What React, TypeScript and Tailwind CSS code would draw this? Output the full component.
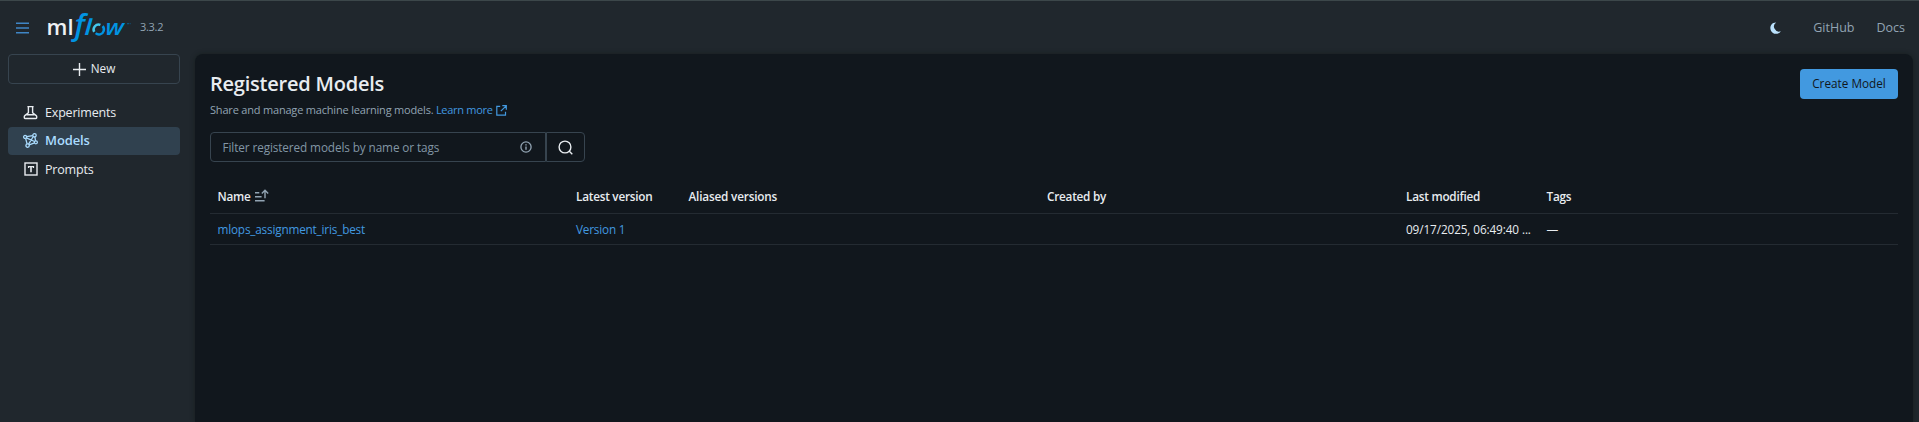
import type { ReactNode } from 'react';

function Logo() {
  return (
    <svg width="86" height="34" viewBox="0 0 86 34" className="block shrink-0 overflow-visible" fontFamily="'Open Sans', sans-serif">
      <text x="-0.5" y="25.2" fontSize="22" fontWeight="600" fill="#eef1f4" textLength="27" lengthAdjust="spacingAndGlyphs">ml</text>
      <g fill="#0194e2" fontStyle="italic" fontWeight="600">
        <text fontSize="29.5" transform="translate(27.6 25.2) scale(1.02 1)">f</text>
        <text fontSize="22" fontWeight="700" transform="translate(37.6 25.2) skewX(-4)">l</text>
        <text fontSize="22" transform="translate(57.9 25.2) scale(1.1 1) skewX(-4)">w</text>
      </g>
      <g fill="none" strokeWidth="2.5">
        <path d="M55.6 16.2a5 5 0 0 1-2.5 8.2a5 5 0 0 1-4.4-1.2" stroke="#0194e2" />
        <path d="M47.2 21.9a5 5 0 0 1 6.2-7" stroke="#43c9ed" />
      </g>
      <path d="M80 13.7h2.2M82.8 13.7h.8" stroke="#0b5f8f" strokeWidth="1" />
    </svg>
  );
}

function MenuIcon() {
  return (
    <svg width="13" height="12" viewBox="0 0 13 12" fill="none" stroke="#3f86c6" strokeWidth="1.6">
      <path d="M0 1.3h13M0 6h13M0 10.7h13" />
    </svg>
  );
}

function BeakerIcon() {
  return (
    <svg width="15" height="15" viewBox="0 0 15 15" fill="none" stroke="currentColor" strokeWidth="1.4" strokeLinejoin="round">
      <path d="M4.4 1.6h6.2M5.4 1.6v6.2L1.8 10.6Q1.3 11 1.3 11.6v1.2q0 .7.7.7h11q.7 0 .7-.7v-1.2q0-.6-.5-1L9.6 7.8V1.6M3.6 9.7h7.8" />
    </svg>
  );
}

function ModelsIcon() {
  return (
    <svg width="15" height="15" viewBox="0 0 15 15" fill="none" stroke="currentColor" strokeWidth="1.3" className="overflow-visible">
      <circle cx="2.1" cy="3.9" r="1.5" />
      <circle cx="11.5" cy="2.3" r="1.7" />
      <circle cx="12.9" cy="9.3" r="1.5" />
      <circle cx="4.6" cy="12.6" r="1.7" />
      <path d="M3.6 3.7l6.2-1.1M11.9 4l.7 3.8M11.5 9.9l-5.3 2M2.6 5.3l1.5 5.6M3.3 4.8l8.3 3.7M10.3 3.5l-4.7 7.7" />
    </svg>
  );
}

function PromptIcon() {
  return (
    <svg width="14" height="14" viewBox="0 0 14 14" fill="none" stroke="currentColor">
      <rect x="1" y="1" width="12" height="12" strokeWidth="1.4" />
      <path d="M4 4.6h6M4.5 4v2M9.5 4v2" strokeWidth="1.2" />
      <path d="M7 4.5v5.8" strokeWidth="1.6" />
    </svg>
  );
}

function NewWindowIcon() {
  return (
    <svg width="11" height="11" viewBox="0 0 11 11" fill="none" stroke="currentColor" strokeWidth="1.2">
      <path d="M4.2 1.3H.8v8.9h8.7V6.8M6.3.7h4v4M10.2.8L4.8 6.2" />
    </svg>
  );
}

function SortIcon() {
  return (
    <svg width="14" height="13" viewBox="0 0 14 13" fill="none" stroke="#92a4b3" strokeWidth="1.4" className="mb-[3px]">
      <path d="M0 3.8h4.3M0 7.8h6.6M0 11.8h9.6M10 9.2V1.4M6.8 4.4l3.2-3.2l3.2 3.2" />
    </svg>
  );
}

function InfoIcon() {
  return (
    <svg width="12" height="12" viewBox="0 0 12 12" fill="none" stroke="#92a4b3" strokeWidth="1.3">
      <circle cx="6" cy="6" r="5.1" />
      <path d="M6 5.4v3.3M6 3.2v1.3" strokeWidth="1.4" />
    </svg>
  );
}

function SearchIcon() {
  return (
    <svg width="15" height="15" viewBox="0 0 15 15" fill="none" stroke="#e8ecf0" strokeWidth="1.4">
      <circle cx="7" cy="7" r="5.9" />
      <path d="M11.1 11.1l3.2 3.2" />
    </svg>
  );
}

function MoonIcon() {
  return (
    <svg width="11" height="12" viewBox="0 0 11 12" fill="#bae1fc">
      <path d="M6.2.4A5.7 5.7 0 1 0 10.8 9.2A5 5 0 0 1 6.2.4z" />
    </svg>
  );
}

const navItems: { label: string; icon: ReactNode; active?: boolean }[] = [
  { label: 'Experiments', icon: <BeakerIcon /> },
  { label: 'Models', icon: <ModelsIcon />, active: true },
  { label: 'Prompts', icon: <PromptIcon /> },
];

const rowClass =
  'grid grid-cols-[358.5px_112.5px_358.5px_359px_140.5px_1fr] items-center border-b border-[#242b32] text-[11.75px] whitespace-nowrap [&>*]:px-[7.5px]';

export default function App() {
  return (
    <div className="flex h-[422px] w-full flex-col overflow-hidden border-t border-[#3c474a] bg-[#20272d] font-['Open_Sans',sans-serif] text-[#e8ecf0]">
      <header className="flex h-[53px] shrink-0 items-center pr-[14px] pl-4">
        <MenuIcon />
        <div className="ml-[18px] pb-px">
          <Logo />
        </div>
        <span className="ml-[7px] text-[11px] tracking-[-0.3px] text-[#92a4b3]">3.3.2</span>
        <nav className="ml-auto flex items-center text-[12.5px] text-[#92a4b3]">
          <MoonIcon />
          <a className="ml-[32px] pt-px">GitHub</a>
          <a className="ml-[22px] pt-px">Docs</a>
        </nav>
      </header>

      <div className="flex min-h-0 flex-1">
        <aside className="w-[195px] shrink-0 pr-[15px] pl-2">
          <button className="flex h-[30px] w-full items-center justify-center gap-[5px] rounded-[4px] border border-[#37444f] text-[11.75px]">
            <svg width="13" height="13" viewBox="0 0 13 13" stroke="currentColor" strokeWidth="1.4">
              <path d="M0 6.5h13M6.5 0v13" />
            </svg>
            New
          </button>
          <ul className="mt-[14px] flex flex-col gap-[0.5px]">
            {navItems.map(({ label, icon, active }) => (
              <li
                key={label}
                className={
                  active
                    ? 'flex h-7 items-center gap-[7px] rounded-[4px] bg-[#30414f] pl-[15px] text-[13px] font-semibold tracking-[-0.1px] text-[#aadcff]'
                    : 'flex h-7 items-center gap-[7px] pl-[15px] text-[12.5px] tracking-[-0.18px]'
                }
              >
                <span className="flex w-[15px] justify-center">{icon}</span>
                <span className={active ? '' : 'pt-[2px]'}>{label}</span>
              </li>
            ))}
          </ul>
        </aside>

        <main className="mr-[6px] flex-1 rounded-t-[8px] bg-[#11171d] px-[15px] pt-[15px] shadow-[0_0_5px_rgba(10,20,16,0.45)]">
          <div className="flex h-[30px] items-center justify-between">
            <h1 className="text-[20px] leading-[30px] font-semibold tracking-[-0.22px]">Registered Models</h1>
            <button className="h-[30px] w-[98px] rounded-[4px] bg-[#4299e0] text-[11.75px] text-[#11171c]">Create Model</button>
          </div>
          <p className="mt-px flex h-5 items-center text-[11px] tracking-[-0.19px] text-[#92a4b3]">
            Share and manage machine learning models.
            <a className="ml-[2.5px] flex items-center gap-[3.5px] tracking-[-0.28px] text-[#4299e0]">
              Learn more <NewWindowIcon />
            </a>
          </p>

          <div className="mt-[12px] flex h-[30px]">
            <div className="flex w-[336px] items-center justify-between rounded-l-[4px] border border-[#37444f] pr-[13px] pl-[11.5px] text-[11.75px] tracking-[-0.1px] text-[#8296a5]">
              <span className="pt-[2px]">Filter registered models by name or tags</span>
              <InfoIcon />
            </div>
            <button className="flex w-[39px] items-center justify-center rounded-r-[4px] border border-[#37444f]">
              <SearchIcon />
            </button>
          </div>

          <div className="mt-[19px]">
            <div className={rowClass + ' h-[33px] font-semibold tracking-[-0.24px]'}>
              <span className="flex items-center gap-[4px]">
                Name <SortIcon />
              </span>
              <span>Latest version</span>
              <span className="tracking-[-0.18px]">Aliased versions</span>
              <span>Created by</span>
              <span>Last modified</span>
              <span>Tags</span>
            </div>
            <div className={rowClass + ' h-[31px] pt-[2px] tracking-[-0.18px]'}>
              <a className="text-[#4299e0]">mlops_assignment_iris_best</a>
              <a className="text-[#4299e0]">Version 1</a>
              <span />
              <span />
              <span className="tracking-[-0.1px]">09/17/2025, 06:49:40 ...</span>
              <span>—</span>
            </div>
          </div>
        </main>
      </div>
    </div>
  );
}
